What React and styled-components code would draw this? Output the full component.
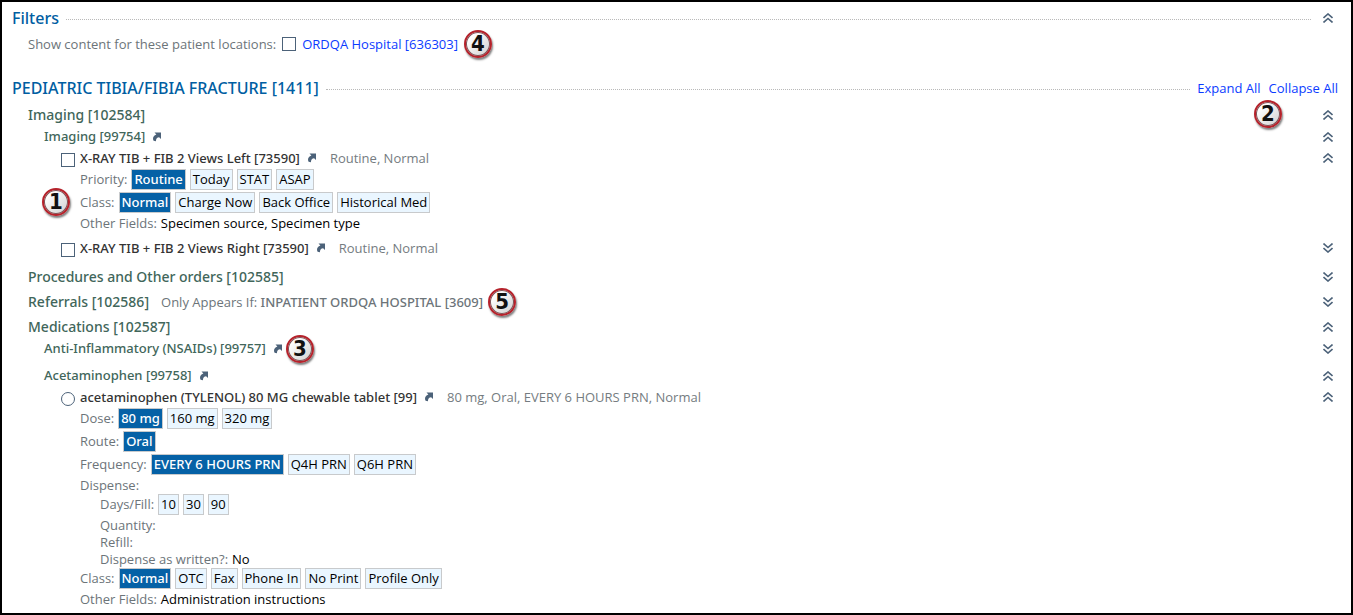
import React from "react";
import styled, { createGlobalStyle, css } from "styled-components";

const GlobalStyle = createGlobalStyle`
  * { box-sizing: border-box; }
  body {
    margin: 0;
    background: #fff;
    color: #000;
    font-family: "Open Sans", "Noto Sans", sans-serif;
    font-size: 13px;
    line-height: 17px;
  }
  button, input { font: inherit; color: inherit; margin: 0; }
  h1, h2, h3 { margin: 0; white-space: nowrap; }
`;

const medium = css`
  font-family: "Noto Sans", "Open Sans", sans-serif;
  font-weight: 500;
`;

const Page = styled.main`
  min-height: 100vh;
  border: 2px solid #000;
  padding: 5px 13px 0 10px;
`;

const Heading = styled.h1`
  ${medium}
  font-size: 16px;
  line-height: 22px;
  color: #005ea2;
`;

const HeadingRow = styled.header`
  display: flex;
  align-items: center;
  height: 22px;
`;

const Leader = styled.span`
  flex: 1;
  margin: 2px 7px 0;
  border-top: 1px dotted #b9b9b9;
`;

const Links = styled.nav`
  display: flex;
  gap: 8px;
`;

const Link = styled.a`
  color: #0b3bff;
  text-decoration: none;
  white-space: nowrap;
`;

const FilterRow = styled.div`
  display: flex;
  align-items: center;
  height: 22px;
  margin: 4px 0 22px;
  padding-left: 16px;
  color: #6c7479;
`;

const FilterCheck = styled.span`
  display: flex;
  align-items: center;
  gap: 6px;
  margin: 0 6px;
`;

const Pick = styled.input`
  appearance: none;
  flex: none;
  width: 14px;
  height: 14px;
  border: 1px solid #4c6279;
  border-radius: ${(p) => (p.type === "radio" ? "50%" : "0")};
  background: #fff;
`;

const Sections = styled.div`
  display: flex;
  flex-direction: column;
  gap: 3px;
  margin-top: 5px;
  padding-left: 16px;
`;

const Row = styled.div`
  display: flex;
  align-items: center;
  height: ${(p) => (p.$tall ? 22 : 21)}px;
  position: relative;
`;

const SectionTitle = styled.h2`
  ${medium}
  font-size: 14px;
  line-height: 22px;
  color: #41665a;
`;

const GroupTitle = styled.h3`
  ${medium}
  font-size: 13px;
  line-height: 21px;
  color: #41665a;
`;

const Condition = styled.span`
  margin: 0 5px 0 12px;
  color: #6c7479;
  white-space: nowrap;
  b { ${medium} }
`;

const Group = styled.section`
  padding-left: 16px;
  & + & { margin-top: 6px; }
`;

const Items = styled.div`
  padding: 0 0 4px 17px;
`;

const Item = styled.article`
  & + & { margin-top: 5px; }
`;

const ItemLabel = styled.label`
  ${medium}
  display: flex;
  align-items: center;
  gap: 5px;
  color: #333;
  white-space: nowrap;
  ${Pick} { margin-top: 3px; }
`;

const Summary = styled.span`
  margin-left: 13px;
  color: #757c81;
  white-space: nowrap;
`;

const Fields = styled.div`
  padding-left: ${(p) => (p.$nested ? 20 : 19)}px;
`;

const ChipRow = styled.div`
  display: flex;
  align-items: center;
  gap: 4px;
  height: 21px;
  margin-bottom: 2px;
  position: relative;
`;

const TextRow = styled.div`
  display: flex;
  gap: 4px;
  height: 17px;
`;

const FieldName = styled.span`
  color: #6c7479;
`;

const Chip = styled.button`
  height: 21px;
  padding: 0 2px;
  border: 1px solid #c8cacc;
  background: #eaf6ff;
  line-height: 19px;
  white-space: nowrap;
  ${(p) =>
    p.$on &&
    css`
      ${medium}
      background: #0561a6;
      color: #fff;
    `}
`;

const IconButton = styled.button`
  display: flex;
  align-items: center;
  justify-content: center;
  width: ${(p) => (p.$small ? 10 : 20)}px;
  height: 20px;
  padding: 0;
  border: 0;
  background: none;
  color: #4c6279;
  flex: none;
  margin-left: ${(p) => (p.$small ? "7px" : p.$end ? "auto" : "0")};
`;

const Callout = styled.span`
  display: flex;
  align-items: center;
  justify-content: center;
  flex: none;
  width: 28px;
  height: 28px;
  border: 2px solid #b5222b;
  border-radius: 50%;
  background: linear-gradient(135deg, #fff 20%, #cfcfcf);
  box-shadow: inset 0 0 0 1px #7d5558, 1px 2px 2px rgba(0, 0, 0, 0.5);
  color: #111;
  font: bold 22px/24px "DejaVu Sans Condensed", "DejaVu Sans", sans-serif;
`;

const FloatingCallout = styled(Callout)`
  position: absolute;
  top: -4px;
  ${(p) => p.$side}: ${(p) => p.$offset}px;
`;

const NextCallout = styled(Callout)`
  margin-left: 3px;
`;

function Toggle({ open, name, end = true }) {
  return (
    <IconButton $end={end} aria-expanded={!!open} aria-label={`Toggle ${name}`}>
      <svg width="10" height="10" viewBox="0 0 10 10" fill="none" stroke="currentColor" strokeWidth="1.6">
        {open ? (
          <path d="M.5 5 5 1l4.500 4M.5 9.500 5 5.500l4.500 4" />
        ) : (
          <path d="M.5.5 5 4.500 9.500.5M.5 5 5 9l4.500-4" />
        )}
      </svg>
    </IconButton>
  );
}

function JumpLink({ name }) {
  return (
    <IconButton $small aria-label={`Open ${name}`}>
      <svg width="10" height="10" viewBox="0 0 10 10">
        <path
          fill="currentColor"
          d="M2.500.5H9V7L7.100 5.200C5.200 5.400 4 6.500 3.900 9.300L1.600 8.700C.3 6 1.500 3.300 4.400 2.400Z"
        />
      </svg>
    </IconButton>
  );
}

function Choices({ name, options, selected, children }) {
  return (
    <ChipRow role="group" aria-label={name}>
      {children}
      <FieldName>{name}:</FieldName>
      {options.map((o) => (
        <Chip key={o} $on={o === selected} aria-pressed={o === selected}>
          {o}
        </Chip>
      ))}
    </ChipRow>
  );
}

function Field({ name, value }) {
  return (
    <TextRow>
      <FieldName>{name}:</FieldName>
      {value && <span>{value}</span>}
    </TextRow>
  );
}

function Order({ type = "checkbox", name, summary, open, children }) {
  return (
    <Item>
      <Row $tall>
        <ItemLabel>
          <Pick type={type} name="order" />
          {name}
        </ItemLabel>
        <JumpLink name={name} />
        <Summary>{summary}</Summary>
        <Toggle open={open} name={name} />
      </Row>
      {children && <Fields>{children}</Fields>}
    </Item>
  );
}

function Section({ name, open, extra, children }) {
  return (
    <section>
      <Row $tall>
        <SectionTitle>{name}</SectionTitle>
        {extra}
        <Toggle open={open} name={name} />
      </Row>
      {children}
    </section>
  );
}

function OrderGroup({ name, open, callout, children }) {
  return (
    <Group>
      <Row>
        <GroupTitle>{name}</GroupTitle>
        <JumpLink name={name} />
        {callout && <NextCallout>{callout}</NextCallout>}
        <Toggle open={open} name={name} />
      </Row>
      {children && <Items>{children}</Items>}
    </Group>
  );
}

export default function App() {
  return (
    <>
      <GlobalStyle />
      <Page>
        <HeadingRow>
          <Heading>Filters</Heading>
          <Leader />
          <Toggle open name="Filters" end={false} />
        </HeadingRow>
        <FilterRow>
          <label htmlFor="location">Show content for these patient locations:</label>
          <FilterCheck>
            <Pick id="location" type="checkbox" />
            <Link href="#hospital">ORDQA Hospital [636303]</Link>
          </FilterCheck>
          <Callout>4</Callout>
        </FilterRow>

        <HeadingRow>
          <Heading>PEDIATRIC TIBIA/FIBIA FRACTURE [1411]</Heading>
          <Leader />
          <Links>
            <Link href="#expand">Expand All</Link>
            <Link href="#collapse">Collapse All</Link>
          </Links>
        </HeadingRow>

        <Sections>
          <Section
            name="Imaging [102584]"
            open
            extra={<FloatingCallout $side="right" $offset={56}>2</FloatingCallout>}
          >
            <OrderGroup name="Imaging [99754]" open>
              <Order name="X-RAY TIB + FIB 2 Views Left [73590]" summary="Routine, Normal" open>
                <Choices name="Priority" options={["Routine", "Today", "STAT", "ASAP"]} selected="Routine" />
                <Choices
                  name="Class"
                  options={["Normal", "Charge Now", "Back Office", "Historical Med"]}
                  selected="Normal"
                >
                  <FloatingCallout $side="left" $offset={-38}>1</FloatingCallout>
                </Choices>
                <Field name="Other Fields" value="Specimen source, Specimen type" />
              </Order>
              <Order name="X-RAY TIB + FIB 2 Views Right [73590]" summary="Routine, Normal" />
            </OrderGroup>
          </Section>

          <Section name="Procedures and Other orders [102585]" />

          <Section
            name="Referrals [102586]"
            extra={
              <>
                <Condition>
                  Only Appears If: <b>INPATIENT ORDQA HOSPITAL [3609]</b>
                </Condition>
                <Callout>5</Callout>
              </>
            }
          />

          <Section name="Medications [102587]" open>
            <OrderGroup name="Anti-Inflammatory (NSAIDs) [99757]" callout="3" />
            <OrderGroup name="Acetaminophen [99758]" open>
              <Order
                type="radio"
                name="acetaminophen (TYLENOL) 80 MG chewable tablet [99]"
                summary="80 mg, Oral, EVERY 6 HOURS PRN, Normal"
                open
              >
                <Choices name="Dose" options={["80 mg", "160 mg", "320 mg"]} selected="80 mg" />
                <Choices name="Route" options={["Oral"]} selected="Oral" />
                <Choices
                  name="Frequency"
                  options={["EVERY 6 HOURS PRN", "Q4H PRN", "Q6H PRN"]}
                  selected="EVERY 6 HOURS PRN"
                />
                <Field name="Dispense" />
                <Fields $nested>
                  <Choices name="Days/Fill" options={["10", "30", "90"]} />
                  <Field name="Quantity" />
                  <Field name="Refill" />
                  <Field name="Dispense as written?" value="No" />
                </Fields>
                <Choices
                  name="Class"
                  options={["Normal", "OTC", "Fax", "Phone In", "No Print", "Profile Only"]}
                  selected="Normal"
                />
                <Field name="Other Fields" value="Administration instructions" />
              </Order>
            </OrderGroup>
          </Section>
        </Sections>
      </Page>
    </>
  );
}
